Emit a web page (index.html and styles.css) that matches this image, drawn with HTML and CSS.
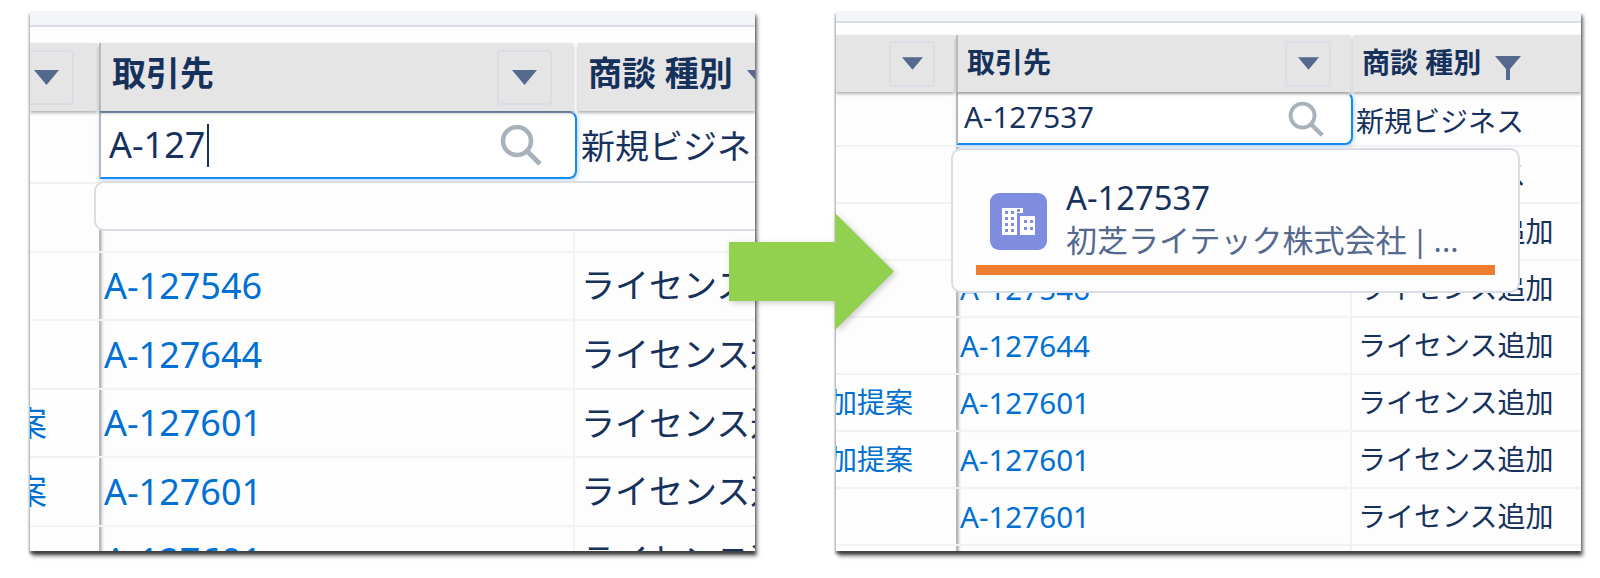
FILE: index.html
```html
<!DOCTYPE html>
<html lang="ja">
<head>
<meta charset="utf-8">
<title>取引先 検索</title>
<link rel="stylesheet" href="styles.css">
</head>
<body>
<svg class="defs" width="0" height="0" aria-hidden="true">
  <symbol id="tri" viewBox="0 0 25 15"><path d="M0 0H25L12.5 15Z"/></symbol>
  <symbol id="search" viewBox="0 0 42 42"><circle cx="17" cy="17" r="14" fill="none" stroke="#a8b2bc" stroke-width="4.5"/><path d="M27 27L40 40" fill="none" stroke="#a8b2bc" stroke-width="5"/></symbol>
</svg>
<main class="stage">
  <section class="panel panel-a">
    <div class="strip"></div>
    <div class="row head">
      <div class="hcell c1"><span class="btn"><svg class="tri"><use href="#tri"/></svg></span></div>
      <div class="hcell c2"><span class="htext">取引先</span><span class="btn"><svg class="tri"><use href="#tri"/></svg></span></div>
      <div class="hcell c3"><span class="htext">商談 種別</span><svg class="tri tri-cut"><use href="#tri"/></svg></div>
    </div>
    <div class="row first">
      <div class="cell c1"></div>
      <div class="inputbox"><span class="val">A-127<span class="caret"></span></span><svg class="search"><use href="#search"/></svg></div>
      <div class="cell c3"><span class="jp">新規ビジネス</span></div>
    </div>
    <div class="row peek"><div class="cell c1"></div><div class="cell c2"><a class="id">A-127537</a></div><div class="cell c3"><span class="jp">ライセンス追加</span></div></div>
    <div class="row"><div class="cell c1"></div><div class="cell c2"><a class="id">A-127546</a></div><div class="cell c3"><span class="jp">ライセンス追加</span></div></div>
    <div class="row"><div class="cell c1"></div><div class="cell c2"><a class="id">A-127644</a></div><div class="cell c3"><span class="jp">ライセンス追加</span></div></div>
    <div class="row"><div class="cell c1"><a class="jp link">追加提案</a></div><div class="cell c2"><a class="id">A-127601</a></div><div class="cell c3"><span class="jp">ライセンス追加</span></div></div>
    <div class="row"><div class="cell c1"><a class="jp link">追加提案</a></div><div class="cell c2"><a class="id">A-127601</a></div><div class="cell c3"><span class="jp">ライセンス追加</span></div></div>
    <div class="row"><div class="cell c1"></div><div class="cell c2"><a class="id">A-127601</a></div><div class="cell c3"><span class="jp">ライセンス追加</span></div></div>
    <div class="popup"></div>
  </section>

  <section class="panel panel-b">
    <div class="strip"></div>
    <div class="row head">
      <div class="hcell c1"><span class="btn"><svg class="tri"><use href="#tri"/></svg></span></div>
      <div class="hcell c2"><span class="htext">取引先</span><span class="btn"><svg class="tri"><use href="#tri"/></svg></span></div>
      <div class="hcell c3"><span class="htext">商談 種別</span><svg class="funnel" viewBox="0 0 26 24"><path d="M0 0H26L15 13V24H11V13Z"/></svg></div>
    </div>
    <div class="row first">
      <div class="cell c1"></div>
      <div class="inputbox"><span class="val">A-127537</span><svg class="search"><use href="#search"/></svg></div>
      <div class="cell c3"><span class="jp">新規ビジネス</span></div>
    </div>
    <div class="row"><div class="cell c1"></div><div class="cell c2"><a class="id">A-127537</a></div><div class="cell c3"><span class="jp">新規ビジネス</span></div></div>
    <div class="row"><div class="cell c1"></div><div class="cell c2"><a class="id">A-127537</a></div><div class="cell c3"><span class="jp">ライセンス追加</span></div></div>
    <div class="row"><div class="cell c1"></div><div class="cell c2"><a class="id">A-127546</a></div><div class="cell c3"><span class="jp">ライセンス追加</span></div></div>
    <div class="row"><div class="cell c1"></div><div class="cell c2"><a class="id">A-127644</a></div><div class="cell c3"><span class="jp">ライセンス追加</span></div></div>
    <div class="row"><div class="cell c1"><a class="jp link">追加提案</a></div><div class="cell c2"><a class="id">A-127601</a></div><div class="cell c3"><span class="jp">ライセンス追加</span></div></div>
    <div class="row"><div class="cell c1"><a class="jp link">追加提案</a></div><div class="cell c2"><a class="id">A-127601</a></div><div class="cell c3"><span class="jp">ライセンス追加</span></div></div>
    <div class="row"><div class="cell c1"></div><div class="cell c2"><a class="id">A-127601</a></div><div class="cell c3"><span class="jp">ライセンス追加</span></div></div>
    <div class="row"><div class="cell c1"></div><div class="cell c2"></div><div class="cell c3"></div></div>
    <div class="popup">
      <div class="result">
        <span class="objicon">
          <svg viewBox="0 0 57 57" width="57" height="57">
            <path fill="#fff" d="M12 15H33V20H27V42H12Z"/>
            <path fill="#fff" d="M30 23H45V42H30Z"/>
            <g fill="#7f8de1">
              <rect x="15" y="18" width="3" height="3"/><rect x="21" y="18" width="3" height="3"/><rect x="27" y="16" width="3" height="3"/>
              <rect x="15" y="24" width="3" height="3"/><rect x="21" y="24" width="3" height="3"/>
              <rect x="15" y="30" width="3" height="3"/><rect x="21" y="30" width="3" height="3"/>
              <rect x="15" y="36" width="3" height="3"/><rect x="21" y="36" width="3" height="3"/>
              <rect x="34" y="27" width="3" height="3"/><rect x="40" y="27" width="3" height="3"/>
              <rect x="34" y="34" width="3" height="3"/><rect x="40" y="34" width="3" height="3"/>
            </g>
          </svg>
        </span>
        <span class="rtext">
          <span class="rtitle">A-127537</span>
          <span class="rsub">初芝ライテック株式会社 | ...</span>
        </span>
      </div>
      <div class="bar"></div>
    </div>
  </section>

  <svg class="arrow" viewBox="0 0 165 117" width="165" height="117" aria-hidden="true">
    <path d="M0 29H106V0L165 58.500L106 117V88H0Z"/>
  </svg>
</main>
</body>
</html>
```
FILE: styles.css
```css
* { box-sizing: border-box; }
html, body { margin: 0; background: #fff; }
body {
  height: 578px;
  overflow: hidden;
  padding: 11px 19px 0 30px;
  font-family: "Noto Sans", "Noto Sans CJK JP", sans-serif;
  color: #16325c;
}
.defs { position: absolute; }
.stage { position: relative; display: flex; gap: 81px; height: 540px; }

.panel {
  position: relative;
  height: 540px;
  overflow: hidden;
  background: #fdfdfe;
  box-shadow: 2px 5px 4px rgba(0, 0, 0, .55), -1px 3px 2px rgba(0, 0, 0, .3), 1px 3px 2px rgba(0, 0, 0, .2);
}
.panel-a {
  width: 725px;
  --c1: 69px; --c2: 474px;
  --h: 68.6px; --hh: 68px;
  --jp: 34px; --id: 36px; --pad: 3px;
  --strip: 16px; --stripgap: 16px;
  --btn: 55px; --tw: 25px; --th: 15px;
  --first: 73px; --inw: 4px; --c1pad: 52px;
  --hlift: 8px; --c1btn: 25px; --inmb: 3px;
}
.panel-b {
  width: 745px;
  --c1: 120px; --c2: 394px;
  --h: 57px; --hh: 57px;
  --jp: 28px; --id: 29.600px; --pad: 2px;
  --strip: 12px; --stripgap: 12px;
  --btn: 46px; --tw: 21px; --th: 13px;
  --first: 55px; --inw: 3px; --c1pad: 43px;
  --hlift: 4px; --c1btn: 19px; --inmb: 0px;
}

.strip {
  height: var(--strip);
  margin-bottom: var(--stripgap);
  background: #f3f5f9;
  border-bottom: 2px solid #d8dde6;
}
.row {
  display: grid;
  grid-template-columns: var(--c1) var(--c2) 1fr;
  height: var(--h);
  border-bottom: 2px solid #f2f2f4;
}
.row.first { height: var(--first); }
.row.peek .cell { padding-bottom: 7px; }
.row.head {
  height: var(--hh);
  border-bottom: 0;
  position: relative;
  z-index: 2;
}

.hcell {
  display: flex;
  align-items: center;
  background: #e5e5e5;
  box-shadow: 0 2px 3px rgba(0, 0, 0, .3);
  font-weight: 700;
  font-size: var(--jp);
  white-space: nowrap;
  overflow: hidden;
}
.hcell.c1 { justify-content: flex-end; padding-right: var(--c1btn); margin-right: 2px; }
.hcell.c2 { justify-content: space-between; border-left: 2px solid #b8b8b8; padding: 0 21px 0 11px; }
.panel-b .hcell.c2 { padding: 0 19px 0 9px; }
.hcell.c3 { margin-left: 5px; padding-left: 10px; gap: 14px; }
.panel-b .hcell.c3 { margin-left: 3px; padding-left: 9px; }
.htext { line-height: 1; margin-bottom: var(--hlift); }
.btn {
  flex: none;
  display: flex;
  align-items: center;
  justify-content: center;
  width: var(--btn);
  height: var(--btn);
  border: 2px solid #d8dde6;
  border-radius: 4px;
}
.panel-a .hcell.c1 .btn { margin-right: -2px; }
.tri { width: var(--tw); height: var(--th); fill: #54698d; flex: none; }
.funnel { width: 26px; height: 24px; fill: #54698d; flex: none; margin-top: 8px; }

.cell {
  display: flex;
  align-items: center;
  min-width: 0;
  overflow: hidden;
  white-space: nowrap;
}
.cell.c1 { justify-content: flex-end; padding-right: var(--c1pad); }
.cell.c2 { border-left: 2px solid #b8b8b8; box-shadow: inset 3px 0 3px -2px rgba(0, 0, 0, .25); padding-left: var(--pad); }
.cell.c3 { border-left: 2px solid #f2f2f4; padding-left: 6px; }
.panel-b .first .cell.c3 { padding: 6px 0 0 4px; }
.jp { font-size: var(--jp); line-height: 1.2; flex: none; }
.link, .id { color: #0070d2; text-decoration: none; }
.id { font-size: var(--id); line-height: 1.2; }

.inputbox {
  display: flex;
  align-items: center;
  justify-content: space-between;
  margin: 0 calc(0px - var(--inw)) var(--inmb) 0;
  background: #fff;
  border: 2px solid #1589ee;
  border-top-color: #7fa3c9;
  border-left: 2px solid #b8b8b8;
  border-radius: 0 8px 8px 0;
  box-shadow: 1px 1px 4px rgba(21, 137, 238, .35);
  position: relative;
  z-index: 1;
  padding: 0 33px 0 8px;
}
.val { display: flex; align-items: center; font-size: var(--id); color: #16325c; line-height: 1; }
.caret { display: inline-block; width: 2px; height: 43px; margin-left: 2px; background: #16325c; }
.search { width: 42px; height: 42px; flex: none; }
.panel-b .search { width: 36px; height: 36px; }
.panel-b .inputbox { padding: 0 27px 0 6px; border-top-color: #e5e5e5; }
.panel-b .val { padding-bottom: 4px; }

.popup {
  position: absolute;
  z-index: 3;
  background: #fdfdfe;
  border: 2px solid #d8dde6;
  border-radius: 10px;
}
.panel-a .popup { left: 64px; top: 170px; width: 700px; height: 50px; }
.panel-b .popup { left: 115px; top: 137px; width: 569px; height: 145px; padding: 43px 23px 0 23px; }

.result { display: flex; gap: 19px; align-items: flex-start; padding-left: 14px; }
.objicon { flex: none; width: 57px; height: 57px; border-radius: 9px; background: #7f8de1; display: block; overflow: hidden; }
.objicon svg { display: block; }
.rtext { display: flex; flex-direction: column; margin-top: -15px; }
.rtitle { font-size: 32.800px; line-height: 40px; color: #16325c; }
.rsub { font-size: 31px; line-height: 44px; color: #54698d; white-space: nowrap; word-spacing: -3px; }
.bar { height: 10px; margin-top: 3px; background: #ed7d31; }

.arrow {
  position: absolute;
  left: 699px;
  top: 202px;
  z-index: 5;
  fill: #92d050;
  overflow: visible;
  filter: drop-shadow(2px 2px 3px rgba(0, 0, 0, .2));
}
```
